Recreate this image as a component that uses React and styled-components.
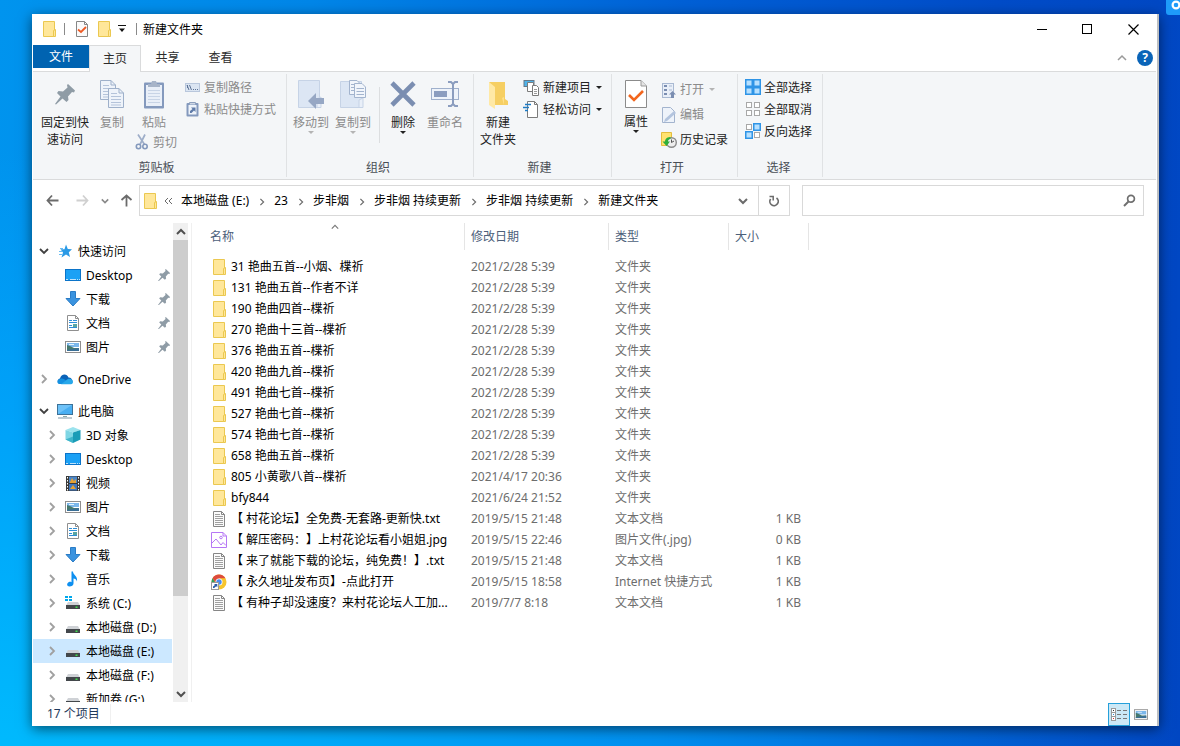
import React, { useState } from 'react';
import styled, { createGlobalStyle, css } from 'styled-components';

const GlobalStyle = createGlobalStyle`
  * {
    box-sizing: border-box;
  }
  body {
    margin: 0;
    color: #000;
    font-family: "Noto Sans", "Noto Sans CJK SC", sans-serif;
    font-size: 12px;
    line-height: 17px;
    text-spacing-trim: space-all;
  }
  button, input {
    font: inherit;
    color: inherit;
  }
  button {
    padding: 0;
    border: none;
    background: none;
    white-space: nowrap;
  }
  svg {
    display: block;
    flex: none;
  }
`;

const Desktop = styled.div`
  position: relative;
  height: 100vh;
  padding: 14px 21px 20px 32px;
  overflow: hidden;
  background:
    radial-gradient(ellipse 100% 80% at 0% 100%, rgba(0, 190, 255, 0.9), rgba(0, 170, 255, 0.65) 55%, rgba(0, 150, 255, 0) 100%),
    linear-gradient(95deg, #0094ee 0%, #0086e8 25%, #0060d6 55%, #004cc8 80%, #0046c2 100%);
`;

const CornerBadge = styled.div`
  position: absolute;
  top: 0;
  right: 0;
  width: 14px;
  height: 15px;
  overflow: hidden;
  border-radius: 0 0 0 3px;
  background: #1e9bfa;
`;

const Window = styled.main`
  display: flex;
  flex-direction: column;
  height: 100%;
  padding: 0 1px;
  background: #fff;
  border-right: 2px solid #bcbfc2;
  box-shadow: 0 3px 12px rgba(0, 0, 0, 0.55);
`;

// ---- title bar ----

const TitleBar = styled.header`
  display: flex;
  align-items: center;
  height: 30px;
  padding-left: 8px;
`;

const QuickButton = styled.button`
  display: flex;
  align-items: center;
  justify-content: center;
  width: ${props => props.$narrow ? 14 : 22}px;
  height: 22px;
`;

const Divider = styled.span`
  width: 1px;
  height: 12px;
  margin: 0 6px 0 7px;
  background: #8a8a8a;
`;

const Title = styled.h1`
  flex: 1;
  margin: 0;
  font-size: 12px;
  font-weight: 400;
`;

const WindowButton = styled.button`
  display: flex;
  align-items: center;
  justify-content: center;
  width: ${props => props.$last ? 46 : 45}px;
  height: 30px;
`;

// ---- ribbon ----

const Tabs = styled.nav`
  display: flex;
  height: 28px;
  padding-top: 1px;
  border-bottom: 1px solid #dadbdc;
`;

const Tab = styled.button`
  width: 53px;
  height: 25px;
  color: #2b2b2b;
  ${props => props.$file && css`
    width: 56px;
    height: 23px;
    color: #fff;
    background: #0063b1;
  `}
  ${props => props.$active && css`
    width: 52px;
    height: 28px;
    padding-bottom: 3px;
    border: 1px solid #dadbdc;
    border-bottom: none;
    background: #f4f6f8;
  `}
`;

const TabTools = styled.div`
  display: flex;
  align-items: center;
  gap: 10px;
  margin-left: auto;
  padding-right: 3px;
`;

const Ribbon = styled.section`
  display: flex;
  padding: 2px 0;
  background: #f4f6f8;
  border-bottom: 1px solid #dadbdc;
`;

const Group = styled.div`
  display: flex;
  flex-direction: column;
  padding: 0 ${props => props.$right || 9}px 0 ${props => props.$left || 4}px;
  border-right: 1px solid #e0e2e4;
`;

const GroupBody = styled.div`
  display: flex;
  height: 84px;
`;

const GroupLabel = styled.div`
  height: 19px;
  line-height: 19px;
  color: #4a4f56;
  text-align: center;
`;

const Stack = styled.div`
  display: flex;
  flex-direction: column;
  padding: ${props => props.$top || 2}px 0 0 ${props => props.$left || 0}px;
`;

const BigButton = styled.button`
  display: flex;
  flex-direction: column;
  align-items: center;
  width: ${props => props.$width || 42}px;
  padding-top: 6px;
  color: ${props => props.disabled ? '#8b8b8b' : '#222'};
  line-height: 17px;
  svg + span {
    margin-top: 5px;
  }
`;

const SmallButton = styled.button`
  display: flex;
  align-items: center;
  gap: ${props => props.$gap || 3}px;
  height: ${props => props.$tall ? 25 : 22}px;
  color: ${props => props.disabled ? '#8b8b8b' : '#222'};
`;

const CutButton = styled(SmallButton)`
  gap: 4px;
  padding-left: 4px;
`;

const Caret = styled.span`
  width: 0;
  height: 0;
  margin-left: ${props => props.$inline ? 2 : 0}px;
  border: 3px solid transparent;
  border-top-color: ${props => props.$dim ? '#b4b4b4' : '#222'};
  border-bottom: none;
`;

const GroupRule = styled.span`
  width: 1px;
  height: 56px;
  margin: 13px 2px 0 5px;
  background: #dcdee0;
`;

// ---- address row ----

const AddressRow = styled.div`
  display: flex;
  align-items: center;
  height: 42px;
  padding: 0 12px 1px 4px;
`;

const NavButton = styled.button`
  display: flex;
  align-items: center;
  justify-content: center;
  width: ${props => props.$width || 30}px;
  height: 28px;
`;

const AddressBox = styled.div`
  display: flex;
  flex: 1;
  align-items: center;
  height: 31px;
  padding-left: 2px;
  border: 1px solid #d9d9d9;
`;

const Crumbs = styled.ol`
  display: flex;
  flex: 1;
  align-items: center;
  margin: 0 0 0 6px;
  padding: 0;
  list-style: none;
  li {
    display: flex;
    align-items: center;
    white-space: nowrap;
  }
  a {
    color: #000;
    text-decoration: none;
  }
  a + svg {
    margin: 2px 8px 0 9px;
  }
`;

const More = styled.li`
  margin-right: 9px;
`;

const AddressButton = styled.button`
  display: flex;
  align-items: center;
  justify-content: center;
  width: 31px;
  height: 29px;
  border-left: ${props => props.$ruled ? '1px solid #d9d9d9' : 'none'};
`;

const SearchBox = styled.label`
  display: flex;
  flex: 0 1 342px;
  align-items: center;
  height: 31px;
  margin-left: 12px;
  padding-right: 7px;
  border: 1px solid #d9d9d9;
  input {
    flex: 1;
    min-width: 0;
    padding: 0 8px;
    border: none;
    outline: none;
  }
`;

// ---- navigation tree ----

const Body = styled.div`
  display: flex;
  flex: 1;
  min-height: 0;
  padding-top: 1px;
`;

const Tree = styled.nav`
  width: 139px;
  padding-top: 16px;
  overflow: hidden;
`;

const TreeList = styled.ul`
  margin: 0 0 8px;
  padding: 0;
  list-style: none;
`;

const TreeItem = styled.li`
  display: flex;
  align-items: center;
  height: 24px;
  padding-left: ${props => props.$child ? 14 : 6}px;
  background: ${props => props.$selected ? '#cce8ff' : 'none'};
  a {
    display: flex;
    flex: 1;
    align-items: center;
    gap: 5px;
    margin-left: 8px;
    color: #000;
    text-decoration: none;
    white-space: nowrap;
  }
`;

const Twisty = styled.span`
  display: flex;
  align-items: center;
  justify-content: center;
  width: 10px;
`;

const Pinned = styled.span`
  padding-right: 2px;
`;

const Scrollbar = styled.div`
  display: flex;
  flex-direction: column;
  width: 15px;
  margin-left: 1px;
  background: #f0f0f0;
`;

const ScrollButton = styled.button`
  display: flex;
  align-items: center;
  justify-content: center;
  height: 17px;
`;

const ScrollTrack = styled.div`
  flex: 1;
`;

const ScrollThumb = styled.div`
  background: #cdcdcd;
`;

// ---- file list ----

const FilePane = styled.div`
  flex: 1;
  min-width: 0;
  margin-left: 3px;
  overflow: hidden;
  border-left: 1px solid #f0f0f0;
`;

const FileTable = styled.table`
  width: 617px;
  table-layout: fixed;
  border-collapse: separate;
  border-spacing: 0;
  th {
    position: relative;
    height: 27px;
    padding: 0 0 0 6px;
    border-right: 1px solid #e5e5e5;
    color: #4c607a;
    font-weight: 400;
    text-align: left;
  }
  th:first-child {
    padding-left: 18px;
  }
  td {
    height: 21px;
    padding: 0 8px 0 6px;
    color: #6d6d6d;
    white-space: nowrap;
    overflow: hidden;
  }
  td:first-child {
    padding: 0 0 0 19px;
    color: #000;
  }
  td:last-child {
    text-align: right;
  }
  tbody::before {
    content: '';
    display: block;
    height: 6px;
  }
`;

const SortMark = styled.span`
  position: absolute;
  top: 0;
  left: 51%;
`;

const FileName = styled.span`
  display: flex;
  align-items: center;
  gap: 4px;
`;

// ---- status bar ----

const StatusBar = styled.footer`
  display: flex;
  align-items: center;
  height: 24px;
  padding: 0 4px 0 14px;
  color: #1e395b;
`;

const StatusText = styled.span`
  padding-right: 10px;
  border-right: 1px solid #f0f0f0;
  margin-right: auto;
  line-height: 20px;
`;

const ViewButton = styled.button`
  display: flex;
  align-items: center;
  justify-content: center;
  width: 22px;
  height: 23px;
  border: 1px solid ${props => props.$active ? '#26a0da' : 'transparent'};
  background: ${props => props.$active ? '#cce8f6' : 'none'};
`;

const HelpMark = styled.span`
  display: block;
  width: 16px;
  height: 16px;
  border-radius: 50%;
  background: #0a64b8;
  color: #fff;
  font-size: 12px;
  font-weight: 700;
  line-height: 16px;
  text-align: center;
`;

// ---- icons ----

const Svg = ({ w = 16, h = 16, box, children }) => (
  <svg width={w} height={h} viewBox={box || `0 0 ${w} ${h}`} fill="none" aria-hidden="true">
    {children}
  </svg>
);

const Chevron = ({ dir, size = 10, color = '#5f5f5f', width = 1.5 }) => {
  const paths = {
    down: 'M1 3 L5 7 L9 3',
    up: 'M1 7 L5 3 L9 7',
    right: 'M3 1 L7 5 L3 9',
  };
  return (
    <Svg w={size} h={size} box="0 0 10 10">
      <path d={paths[dir]} stroke={color} strokeWidth={width} />
    </Svg>
  );
};

const FolderIcon = () => (
  <Svg>
    <path d="M2.5 .5 H13.5 V15.5 H2.5 Z" fill="#ffe79a" stroke="#ebc850" />
    <path d="M12.5 9.5 L14.5 8.5 V15.5 H12.5 Z" fill="#ffe79a" stroke="#ebc850" />
  </Svg>
);

const CheckPageIcon = ({ big }) => (
  <Svg w={big ? 22 : 14} h={big ? 28 : 16}>
    {big ? (
      <>
        <path d="M.5 .5 H16 L21.5 6 V27.5 H.5 Z" fill="#fff" stroke="#8b8b8b" />
        <path d="M16 .5 V6 H21.5" fill="#e4e4e4" stroke="#9a9a9a" />
        <path d="M4 15 L9 20 L18 11" stroke="#f2661e" strokeWidth="2.6" />
      </>
    ) : (
      <>
        <path d="M1.5 .5 H9.5 L12.5 3.5 V15.5 H1.5 Z" fill="#fafafa" stroke="#868686" />
        <path d="M9.5 .5 V3.5 H12.5" stroke="#868686" />
        <path d="M3 8.5 L6 11 L11 6" stroke="#ee5a24" strokeWidth="1.8" />
      </>
    )}
  </Svg>
);

const PinIcon = ({ big }) => (
  <Svg w={big ? 28 : 12} h={big ? 29 : 12} box={big ? '0 0 28 29' : '4 4 20 20'}>
    <path
      d="M17 4 L24 10.5 L23 12.5 L21 12 L17 16.5 L17.5 20 L15.5 22 L11.5 18.5 L5 24.5 L4 24 L9.5 16.5 L6 13 L7.5 11 L12 11.5 L16.5 7.5 L16 5 Z"
      fill="#8f9ca6"
    />
  </Svg>
);

const PageLines = ({ x, y }) => (
  <g transform={`translate(${x} ${y})`}>
    <path d="M.5 .5 H11 L15.5 5 V19.5 H.5 Z" fill="#eef3fa" stroke="#9eb0ca" />
    <path d="M11 .5 V5 H15.5" stroke="#9eb0ca" />
    <path d="M3 5.5 H9 M3 8.5 H13 M3 11.5 H13 M3 14.5 H13 M3 17 H13" stroke="#b4c3da" />
  </g>
);

const CopyIcon = () => (
  <Svg w={26} h={29}>
    <PageLines x={1} y={0} />
    <PageLines x={9} y={8} />
  </Svg>
);

const PasteIcon = () => (
  <Svg w={22} h={29}>
    <rect x="1" y="2.5" width="20" height="26" rx="1" fill="#8499bd" />
    <rect x="3" y="5" width="16" height="21" fill="#e9eff8" />
    <path d="M5 10.5 H17 M5 13.5 H17 M5 16.5 H17 M5 19.5 H17 M5 22.5 H17" stroke="#c8d4e6" />
    <path d="M5 7 V4 H8 L9 1 H13 L14 4 H17 V7 Z" fill="#a7b4c8" />
  </Svg>
);

const ScissorsIcon = () => (
  <Svg w={14} h={16}>
    <path d="M3 .5 L9.5 10.5 M10 .5 L5 10.5" stroke="#9eaec9" strokeWidth="1.7" />
    <circle cx="3.5" cy="12.5" r="2.2" stroke="#8499bd" strokeWidth="1.6" />
    <circle cx="10" cy="12.5" r="2.2" stroke="#8499bd" strokeWidth="1.6" />
  </Svg>
);

const CopyPathIcon = () => (
  <Svg>
    <rect x=".5" y="4.5" width="14" height="8" fill="#dbe5f2" stroke="#b9c7dc" />
    <path d="M2 6 L4 11 M4.5 6 L6.5 11 M2.5 6 V9" stroke="#5f7598" />
    <path d="M8 10.5 H9 M10 10.5 H11 M12 10.5 H13" stroke="#5f7598" />
  </Svg>
);

const PasteLinkIcon = () => (
  <Svg>
    <rect x="1.5" y="2" width="12" height="13.5" rx="1" fill="#8499bd" />
    <rect x="3.5" y="4" width="8" height="9.5" fill="#eef3fa" />
    <path d="M4.5 3.5 V1.5 H10.5 V3.5" fill="#cdd6e4" stroke="#8ea0bd" />
    <path d="M5 12 V10 L7.5 8 L6 6.5 H10.5 V11 L9 9.5 L6.5 12 Z" fill="#5f7ba8" />
  </Svg>
);

const MoveToIcon = () => (
  <Svg w={28} h={29}>
    <path d="M1.5 .5 H22.5 V27.5 H1.5 Z" fill="#dce6f4" stroke="#c6d3e6" />
    <path d="M20 19 L24 17 V27.5 H20 Z" fill="#e9eff8" stroke="#c6d3e6" />
    <path d="M11 21 L19 13 V18 H27 V24 H19 V29 Z" fill="#96a7c4" />
  </Svg>
);

const CopyToIcon = () => (
  <Svg w={28} h={29}>
    <path d="M1.5 1.5 H22.5 V27.5 H1.5 Z" fill="#dce6f4" stroke="#c6d3e6" />
    <path d="M20 20 L24 18 V27.5 H20 Z" fill="#e9eff8" stroke="#c6d3e6" />
    <g stroke="#a3b4ce" fill="#f1f5fb">
      <path d="M10.5 .5 H18 L21.5 4 V14.5 H10.5 Z" />
      <path d="M15.5 3.5 H23 L26.5 7 V17.5 H15.5 Z" />
      <path d="M12 4.5 H15 M12 7.5 H15 M12 10.5 H15 M17.5 8.5 H25 M17.5 11.5 H25 M17.5 14.5 H25" />
    </g>
  </Svg>
);

const DeleteIcon = () => (
  <Svg w={26} h={29}>
    <path d="M2 3 L24 25 M24 3 L2 25" stroke="#7b8eb1" strokeWidth="4.6" />
  </Svg>
);

const RenameIcon = () => (
  <Svg w={30} h={29}>
    <rect x="1.5" y="8.5" width="27" height="11" fill="#eef3fa" stroke="#9fb0cc" />
    <rect x="4" y="11" width="13" height="6" fill="#8b9dbf" />
    <path d="M18 2 H21 L23 4 L25 2 H28 M23 3 V25 M18 26 H21 L23 24 L25 26 H28" stroke="#8b9dbf" strokeWidth="2" />
  </Svg>
);

const NewFolderIcon = () => (
  <Svg w={22} h={29}>
    <path d="M2 2 H18 V19 L21 21 V25 H8 Z" fill="#f6cf63" />
    <path d="M2 2 L8 7 V29 L2 25 Z" fill="#ffe9a6" />
    <path d="M15 18 L17 17 V25" fill="#ffe08a" />
  </Svg>
);

const NewItemIcon = () => (
  <Svg w={17} h={17}>
    <rect x="1" y="1.5" width="10" height="6" fill="#4fb3ea" stroke="#64798a" />
    <path d="M4.5 3.5 H10.5 V12.5 H4.5 Z" fill="#fff" stroke="#7b7b7b" />
    <path d="M9.5 6.5 H13.5 L15.5 8.5 V16.5 H9.5 Z" fill="#fff" stroke="#7b7b7b" />
    <path d="M11 10.5 H14 M11 12.5 H14 M11 14.5 H14" stroke="#9a9a9a" />
  </Svg>
);

const EasyAccessIcon = () => (
  <Svg w={17} h={17}>
    <path d="M4.5 .5 H11.5 L14.5 3.5 V16.5 H4.5 Z" fill="#fff" stroke="#7b7b7b" />
    <path d="M11.5 .5 V3.5 H14.5" stroke="#7b7b7b" />
    <path d="M2 3.5 H8 M0 6.5 H6 M2 9.5 H5" stroke="#1f7bc4" strokeWidth="1.4" />
  </Svg>
);

const OpenIcon = () => (
  <Svg>
    <rect x="1.5" y="1.5" width="11" height="14" fill="#e9eff8" stroke="#a9b9d2" />
    <path d="M3 4 H6 M3 8 H6 M3 12 H6" stroke="#7b8eb1" strokeWidth="2" />
    <path d="M8 4 H11 M8 8 H11" stroke="#a9b9d2" />
    <path d="M11.5 9 L15 12.5 H13 V16 H10 V12.5 H8 Z" fill="#7b8eb1" />
  </Svg>
);

const EditIcon = () => (
  <Svg>
    <path d="M1.5 .5 H9.5 L13.5 4.5 V15.5 H1.5 Z" fill="#eef3fa" stroke="#a3b4ce" />
    <path d="M3 15 L4 12 L13 4 L15 6 L6 14 Z" fill="#b3c4de" />
  </Svg>
);

const HistoryIcon = () => (
  <Svg>
    <path d="M.5 .5 H10.5 V13.5 H.5 Z" fill="#ffe26f" stroke="#e3bd3d" />
    <circle cx="10.5" cy="10.5" r="4.8" fill="#eee" stroke="#8b8b8b" strokeWidth="1.4" />
    <path d="M10.5 7.5 V10.5 L13 9" stroke="#555" />
    <path d="M9.5 5 C5 5 4 8 4 9.5 H1.5 L5.5 14 L9 9.5 H7 C7 8 8 7 9.5 7 Z" fill="#2fae3a" />
  </Svg>
);

const SelectIcon = ({ on }) => (
  <Svg>
    {[[0, 0], [8, 0], [0, 8], [8, 8]].map(([x, y], i) => (
      <rect
        key={i}
        x={on[i] ? x + 0.75 : x + 1.5}
        y={on[i] ? y + 0.75 : y + 1.5}
        width={on[i] ? 6.5 : 5}
        height={on[i] ? 6.5 : 5}
        fill={on[i] ? '#b7e0ff' : '#fff'}
        stroke={on[i] ? '#2f94e6' : '#a8a8a8'}
        strokeWidth={on[i] ? 1.5 : 1}
      />
    ))}
  </Svg>
);

const StarIcon = () => (
  <Svg>
    <path d="M9 1.5 L10.8 6 L15 6.3 L11.8 9.3 L13 14 L9 11.5 L4.5 14.5 L6 9.5 L3.5 6.3 H7.5 Z" fill="#2a9ae6" />
    <path d="M3 5.5 H6 M2 8.5 H5 M2 11.5 H5" stroke="#69bdf2" />
  </Svg>
);

const MonitorTile = () => (
  <Svg>
    <rect x=".5" y="2.5" width="15" height="11" fill="#1ba1f5" stroke="#0b74c9" />
    <path d="M1 12.5 H3 M5 12.5 H11 M12 12.5 H13 M14 12.5 H15" stroke="#bfe3fb" />
  </Svg>
);

const DownIcon = () => (
  <Svg>
    <path d="M5.5 .5 H10.5 V7.5 H15 L8 15 L1 7.5 H5.5 Z" fill="#3a93df" stroke="#2a7cc6" />
  </Svg>
);

const DocIcon = () => (
  <Svg>
    <path d="M2.5 .5 H10.5 L13.5 3.5 V15.5 H2.5 Z" fill="#fff" stroke="#8f8f8f" />
    <path d="M10.5 .5 V3.5 H13.5" stroke="#8f8f8f" />
    <path d="M4 5.5 H7 M8 5.5 H12 M4 7.5 H12 M4 10.5 H7 M4 12.5 H12" stroke="#2f8fd8" />
    <rect x="8" y="9" width="4" height="3" fill="#5aa6a0" />
  </Svg>
);

const PictureIcon = ({ small }) => (
  <Svg w={small ? 14 : 16} h={small ? 11 : 16} box={small ? '0 2 16 12' : '0 0 16 16'}>
    <rect x=".5" y="2.5" width="15" height="11" fill="#fff" stroke="#8f8f8f" />
    <rect x="2" y="4" width="12" height="4" fill="#7ab6ea" />
    <path d="M2 6 L5 7 L9 9 H14 V12 H2 Z" fill="#46786e" />
    <path d="M2 11 L14 9 V12 H2 Z" fill="#3a6f96" />
    <path d="M4 5.5 H9" stroke="#e3f1fb" />
  </Svg>
);

const CloudIcon = () => (
  <Svg>
    <path d="M3 12 C0 12 0 8 3 7.5 C4 2.5 10 2 11.5 6.5 C16 6.5 17 12.5 13 13 H4 Z" fill="#0a63b8" />
    <path d="M3 13 C0 13 -1 9 3 8 C5 7 7 8 9 9.5 L14 12.5 L13 13 Z" fill="#1490e0" />
    <path d="M9 9.5 C11 6.5 16 7.5 16 11 C16 13 14 13.3 13 13.3 H4 Z" fill="#28a8ea" />
  </Svg>
);

const ComputerIcon = () => (
  <Svg>
    <rect x=".5" y="1.5" width="15" height="10" fill="#6ec2f8" stroke="#3c7299" />
    <path d="M1 11 L15 2 V11 Z" fill="#48aef2" />
    <path d="M6 13.5 H10" stroke="#8aa" />
    <path d="M1 15 H15" stroke="#7f97a6" />
  </Svg>
);

const CubeIcon = () => (
  <Svg>
    <path d="M8 0 L15.5 3 L8 5.5 L.5 3 Z" fill="#9be3ee" />
    <path d="M.5 3 L8 5.5 V16 L.5 12.5 Z" fill="#7fd6e4" />
    <path d="M15.5 3 L8 5.5 V16 L15.5 12.5 Z" fill="#1a9cb7" />
    <path d="M.5 12.5 L8 9.5 V16 Z" fill="#3fb5cb" />
  </Svg>
);

const VideoIcon = () => (
  <Svg>
    <rect x="1" y="1" width="14" height="15" fill="#3a3a3a" />
    <rect x="4" y="1.5" width="8" height="6.5" fill="#4a86c8" />
    <rect x="4" y="9" width="8" height="6.5" fill="#3f76bd" />
    <path d="M5 7 L7 3 L9 6 L11 4 V8 H5 Z M5 14 L8 10 L11 14 Z" fill="#e6a233" />
    <path d="M2.5 2 V16 M13.5 2 V16" stroke="#fff" strokeDasharray="1.5 1.5" />
  </Svg>
);

const MusicIcon = () => (
  <Svg>
    <path d="M6.5 .5 H8 C8 4 13 5 12 10.5 C11.5 8.5 10 7.5 8.5 7.5 V12.5 C8.5 14.5 6.5 15.5 4.5 15.5 C1.5 15.5 1.5 12 4 11 C5 10.7 6 11 6.5 11.2 Z" fill="#0d8ff0" />
  </Svg>
);

const DriveIcon = ({ system }) => (
  <Svg>
    {system && <path d="M0 1 H3 V3 H0 Z M4 1 H7 V3 H4 Z M0 4 H3 V6 H0 Z M4 4 H7 V6 H4 Z" fill="#00a8ec" />}
    <path d="M3 7 H13 L15 10.5 H1 Z" fill="#cfd2d6" />
    <rect x="1" y="10" width="14" height="4" fill="#43474b" />
    <rect x="10.5" y="11.5" width="2" height="1.5" fill="#3fe04c" />
  </Svg>
);

const TextIcon = () => (
  <Svg>
    <path d="M2.5 .5 H10.5 L13.5 3.5 V15.5 H2.5 Z" fill="#fbfbfb" stroke="#868686" />
    <path d="M10.5 .5 V3.5 H13.5" stroke="#868686" />
    <path d="M4 3.5 H9 M4 5.5 H12 M4 7.5 H12 M4 9.5 H12 M4 11.5 H12 M4 13.5 H12" stroke="#a0a0a0" />
  </Svg>
);

const JpgIcon = () => (
  <Svg>
    <path d="M.5 .5 H12 L15.5 4 V15.5 H.5 Z" fill="#fff" stroke="#b678f5" />
    <path d="M12 .5 V4 H15.5" stroke="#b678f5" />
    <circle cx="10" cy="5.5" r="1.3" stroke="#b678f5" />
    <path d="M1 11 L5 7 L10 13 L12 10.5 L15 13.5" stroke="#b678f5" />
  </Svg>
);

const ChromeIcon = () => (
  <Svg>
    <circle cx="8" cy="8" r="7.5" fill="#f7c52d" />
    <path d="M1.5 4.2 A7.5 7.5 0 0 1 14.5 4.3 H8 L5 9.5 Z" fill="#dd4b3e" />
    <path d="M1.5 4.2 L5 9.8 L8.5 11.5 L7 15.4 A7.5 7.5 0 0 1 1.5 4.2 Z" fill="#2ca15a" />
    <circle cx="8" cy="8" r="3.5" fill="#fff" />
    <circle cx="8" cy="8" r="2.7" fill="#4a8bf0" />
    <rect x=".5" y="8.5" width="7" height="7" fill="#fff" stroke="#9a9a9a" />
    <path d="M2 14 V12.5 L4 11 L3 10 H6.3 V13.3 L5.2 12.2 L3.2 14 Z" fill="#2a5ca8" />
  </Svg>
);

const Arrow = ({ color, d }) => (
  <Svg w={13} h={13}>
    <path d={d} stroke={color} strokeWidth="1.8" />
  </Svg>
);

// ---- data ----

const crumbs = ['本地磁盘 (E:)', '23', '步非烟', '步非烟 持续更新', '步非烟 持续更新', '新建文件夹'];

const quickAccess = [
  { name: 'Desktop', icon: <MonitorTile /> },
  { name: '下载', icon: <DownIcon /> },
  { name: '文档', icon: <DocIcon /> },
  { name: '图片', icon: <PictureIcon /> },
];

const thisPc = [
  { name: '3D 对象', icon: <CubeIcon /> },
  { name: 'Desktop', icon: <MonitorTile /> },
  { name: '视频', icon: <VideoIcon /> },
  { name: '图片', icon: <PictureIcon /> },
  { name: '文档', icon: <DocIcon /> },
  { name: '下载', icon: <DownIcon /> },
  { name: '音乐', icon: <MusicIcon /> },
  { name: '系统 (C:)', icon: <DriveIcon system /> },
  { name: '本地磁盘 (D:)', icon: <DriveIcon /> },
  { name: '本地磁盘 (E:)', icon: <DriveIcon /> },
  { name: '本地磁盘 (F:)', icon: <DriveIcon /> },
  { name: '新加卷 (G:)', icon: <DriveIcon /> },
];

const kinds = {
  folder: { label: '文件夹', icon: <FolderIcon /> },
  txt: { label: '文本文档', icon: <TextIcon /> },
  jpg: { label: '图片文件(.jpg)', icon: <JpgIcon /> },
  url: { label: 'Internet 快捷方式', icon: <ChromeIcon /> },
};

const files = [
  ['31 艳曲五首--小烟、楪祈', '2021/2/28 5:39', 'folder', ''],
  ['131 艳曲五首--作者不详', '2021/2/28 5:39', 'folder', ''],
  ['190 艳曲四首--楪祈', '2021/2/28 5:39', 'folder', ''],
  ['270 艳曲十三首--楪祈', '2021/2/28 5:39', 'folder', ''],
  ['376 艳曲五首--楪祈', '2021/2/28 5:39', 'folder', ''],
  ['420 艳曲九首--楪祈', '2021/2/28 5:39', 'folder', ''],
  ['491 艳曲七首--楪祈', '2021/2/28 5:39', 'folder', ''],
  ['527 艳曲七首--楪祈', '2021/2/28 5:39', 'folder', ''],
  ['574 艳曲七首--楪祈', '2021/2/28 5:39', 'folder', ''],
  ['658 艳曲五首--楪祈', '2021/2/28 5:39', 'folder', ''],
  ['805 小黄歌八首--楪祈', '2021/4/17 20:36', 'folder', ''],
  ['bfy844', '2021/6/24 21:52', 'folder', ''],
  ['【 村花论坛】全免费-无套路-更新快.txt', '2019/5/15 21:48', 'txt', '1 KB'],
  ['【 解压密码：】上村花论坛看小姐姐.jpg', '2019/5/15 22:46', 'jpg', '0 KB'],
  ['【 来了就能下载的论坛，纯免费！】.txt', '2019/5/15 21:48', 'txt', '1 KB'],
  ['【 永久地址发布页】-点此打开', '2019/5/15 18:58', 'url', '1 KB'],
  ['【 有种子却没速度？来村花论坛人工加...', '2019/7/7 8:18', 'txt', '1 KB'],
];

const TreeNode = ({ node, child, open, leaf, pinned, selected, onSelect }) => (
  <TreeItem $child={child} $selected={selected}>
    <Twisty>
      {!leaf && <Chevron dir={open ? 'down' : 'right'} color={open ? '#404040' : '#a0a0a0'} width={1.8} />}
    </Twisty>
    <a href="#" onClick={onSelect}>
      {node.icon}
      {node.name}
    </a>
    {pinned && <Pinned><PinIcon /></Pinned>}
  </TreeItem>
);

function RibbonBar() {
  return (
    <Ribbon>
      <Group $right={10}>
        <GroupBody>
          <BigButton $width={56}><PinIcon big /><span>固定到快<br />速访问</span></BigButton>
          <BigButton $width={38} disabled><CopyIcon /><span>复制</span></BigButton>
          <div>
            <BigButton $width={46} disabled><PasteIcon /><span>粘贴</span></BigButton>
            <CutButton disabled><ScissorsIcon />剪切</CutButton>
          </div>
          <Stack $left={8}>
            <SmallButton disabled><CopyPathIcon />复制路径</SmallButton>
            <SmallButton disabled><PasteLinkIcon />粘贴快捷方式</SmallButton>
          </Stack>
        </GroupBody>
        <GroupLabel>剪贴板</GroupLabel>
      </Group>

      <Group $left={3} $right={7}>
        <GroupBody>
          <BigButton disabled><MoveToIcon /><span>移动到</span><Caret $dim /></BigButton>
          <BigButton disabled><CopyToIcon /><span>复制到</span><Caret $dim /></BigButton>
          <GroupRule />
          <BigButton><DeleteIcon /><span>删除</span><Caret /></BigButton>
          <BigButton disabled><RenameIcon /><span>重命名</span></BigButton>
        </GroupBody>
        <GroupLabel>组织</GroupLabel>
      </Group>

      <Group $left={3} $right={9}>
        <GroupBody>
          <BigButton><NewFolderIcon /><span>新建<br />文件夹</span></BigButton>
          <Stack $left={4}>
            <SmallButton><NewItemIcon />新建项目<Caret $inline /></SmallButton>
            <SmallButton><EasyAccessIcon />轻松访问<Caret $inline /></SmallButton>
          </Stack>
        </GroupBody>
        <GroupLabel>新建</GroupLabel>
      </Group>

      <Group>
        <GroupBody>
          <BigButton $width={40}><CheckPageIcon big /><span>属性</span><Caret /></BigButton>
          <Stack $left={5} $top={3}>
            <SmallButton $tall disabled><OpenIcon />打开<Caret $inline $dim /></SmallButton>
            <SmallButton $tall disabled><EditIcon />编辑</SmallButton>
            <SmallButton $tall><HistoryIcon />历史记录</SmallButton>
          </Stack>
        </GroupBody>
        <GroupLabel>打开</GroupLabel>
      </Group>

      <Group $left={7} $right={10}>
        <GroupBody>
          <Stack>
            <SmallButton><SelectIcon on={[1, 1, 1, 1]} />全部选择</SmallButton>
            <SmallButton><SelectIcon on={[0, 0, 0, 0]} />全部取消</SmallButton>
            <SmallButton><SelectIcon on={[0, 1, 1, 0]} />反向选择</SmallButton>
          </Stack>
        </GroupBody>
        <GroupLabel>选择</GroupLabel>
      </Group>
    </Ribbon>
  );
}

export default function App() {
  const [selected, setSelected] = useState('本地磁盘 (E:)');

  return (
    <Desktop>
      <GlobalStyle />
      <CornerBadge>
        <Svg w={14} h={15}>
          <circle cx="10" cy="5" r="3.4" stroke="#fff" strokeWidth="2.2" />
        </Svg>
      </CornerBadge>
      <Window>
        <TitleBar>
          <FolderIcon />
          <Divider />
          <QuickButton aria-label="属性"><CheckPageIcon /></QuickButton>
          <QuickButton aria-label="新建文件夹"><FolderIcon /></QuickButton>
          <QuickButton $narrow aria-label="自定义快速访问工具栏">
            <Svg w={8} h={8}>
              <path d="M0 .5 H8" stroke="#111" />
              <path d="M1 3.5 H7 L4 7 Z" fill="#111" />
            </Svg>
          </QuickButton>
          <Divider />
          <Title>新建文件夹</Title>
          <WindowButton aria-label="最小化">
            <Svg w={11} h={11}><path d="M0 5.5 H10" stroke="#000" /></Svg>
          </WindowButton>
          <WindowButton aria-label="最大化">
            <Svg w={11} h={11}><rect x=".5" y=".5" width="9" height="9" stroke="#000" /></Svg>
          </WindowButton>
          <WindowButton $last aria-label="关闭">
            <Svg w={11} h={11}><path d="M.5 .5 L10.5 10.5 M10.5 .5 L.5 10.5" stroke="#000" strokeWidth="1.2" /></Svg>
          </WindowButton>
        </TitleBar>

        <Tabs>
          <Tab $file>文件</Tab>
          <Tab $active>主页</Tab>
          <Tab>共享</Tab>
          <Tab>查看</Tab>
          <TabTools>
            <button aria-label="最小化功能区"><Chevron dir="up" color="#9a9a9a" /></button>
            <button aria-label="帮助"><HelpMark>?</HelpMark></button>
          </TabTools>
        </Tabs>

        <RibbonBar />

        <AddressRow>
          <NavButton aria-label="后退"><Arrow color="#6b6b6b" d="M6 1.5 L1.5 6.5 L6 11.5 M1.5 6.5 H12.5" /></NavButton>
          <NavButton aria-label="前进"><Arrow color="#d0d0d0" d="M7 1.5 L11.5 6.5 L7 11.5 M11.5 6.5 H.5" /></NavButton>
          <NavButton $width={16} aria-label="最近浏览的位置"><Chevron dir="down" size={8} color="#8a8a8a" width={2} /></NavButton>
          <NavButton $width={26} aria-label="向上"><Arrow color="#6b6b6b" d="M1.5 6 L6.5 1.5 L11.5 6 M6.5 1.5 V12.5" /></NavButton>
          <AddressBox>
            <FolderIcon />
            <Crumbs>
              <More>
                <Svg w={8} h={8}><path d="M4 1 L1 4 L4 7 M8 1 L5 4 L8 7" stroke="#6b6b6b" /></Svg>
              </More>
              {crumbs.map((crumb, i) => (
                <li key={i}>
                  <a href="#">{crumb}</a>
                  {i < crumbs.length - 1 && <Chevron dir="right" size={8} color="#6b6b6b" />}
                </li>
              ))}
            </Crumbs>
            <AddressButton aria-label="以前的位置"><Chevron dir="down" color="#6b6b6b" width={2} /></AddressButton>
            <AddressButton $ruled aria-label="刷新">
              <Svg w={12} h={12}>
                <path d="M2.6 4 A4.2 4.2 0 1 0 8.5 3" stroke="#6b6b6b" strokeWidth="1.7" />
                <path d="M1.5 1.5 H5.2 V5.5" stroke="#6b6b6b" strokeWidth="1.5" />
              </Svg>
            </AddressButton>
          </AddressBox>
          <SearchBox>
            <input type="search" aria-label="搜索" />
            <Svg w={13} h={13}>
              <circle cx="8" cy="4.8" r="3.4" stroke="#6f6f6f" strokeWidth="1.7" />
              <path d="M5.5 7.5 L1 12" stroke="#6f6f6f" strokeWidth="2" />
            </Svg>
          </SearchBox>
        </AddressRow>

        <Body>
          <Tree>
            <TreeList>
              <TreeNode node={{ name: '快速访问', icon: <StarIcon /> }} open />
              {quickAccess.map(node => <TreeNode key={node.name} node={node} child leaf pinned />)}
            </TreeList>
            <TreeList>
              <TreeNode node={{ name: 'OneDrive', icon: <CloudIcon /> }} />
            </TreeList>
            <TreeList>
              <TreeNode node={{ name: '此电脑', icon: <ComputerIcon /> }} open />
              {thisPc.map(node => (
                <TreeNode
                  key={node.name}
                  node={node}
                  child
                  selected={node.name === selected}
                  onSelect={() => setSelected(node.name)}
                />
              ))}
            </TreeList>
          </Tree>
          <Scrollbar>
            <ScrollButton aria-label="向上滚动"><Chevron dir="up" color="#505050" width={2} /></ScrollButton>
            <ScrollTrack><ScrollThumb style={{ height: '80%' }} /></ScrollTrack>
            <ScrollButton aria-label="向下滚动"><Chevron dir="down" color="#505050" width={2} /></ScrollButton>
          </Scrollbar>

          <FilePane>
            <FileTable>
              <colgroup>
                <col style={{ width: 273 }} />
                <col style={{ width: 144 }} />
                <col style={{ width: 120 }} />
                <col style={{ width: 80 }} />
              </colgroup>
              <thead>
                <tr>
                  <th>名称<SortMark><Chevron dir="up" size={8} color="#7a7a7a" /></SortMark></th>
                  <th>修改日期</th>
                  <th>类型</th>
                  <th>大小</th>
                </tr>
              </thead>
              <tbody>
                {files.map(([name, date, kind, size]) => (
                  <tr key={name}>
                    <td><FileName>{kinds[kind].icon}{name}</FileName></td>
                    <td>{date}</td>
                    <td>{kinds[kind].label}</td>
                    <td>{size}</td>
                  </tr>
                ))}
              </tbody>
            </FileTable>
          </FilePane>
        </Body>

        <StatusBar>
          <StatusText>17 个项目</StatusText>
          <ViewButton $active aria-label="详细信息">
            <Svg w={16} h={13}>
              <rect x=".5" y=".5" width="4" height="12" fill="#fff" stroke="#9a9a9a" />
              <path d="M.5 4.5 H4.5 M.5 8.5 H4.5" stroke="#9a9a9a" />
              <path d="M6 2.5 H10 M12 2.5 H16 M6 6.5 H10 M12 6.5 H16 M6 10.5 H10 M12 10.5 H16" stroke="#777" />
              <path d="M2 2.5 H3" stroke="#333" />
              <path d="M2 6.5 H3" stroke="#2f8fd8" />
              <path d="M2 10.5 H3" stroke="#d33" />
            </Svg>
          </ViewButton>
          <ViewButton aria-label="大缩略图"><PictureIcon small /></ViewButton>
        </StatusBar>
      </Window>
    </Desktop>
  );
}
